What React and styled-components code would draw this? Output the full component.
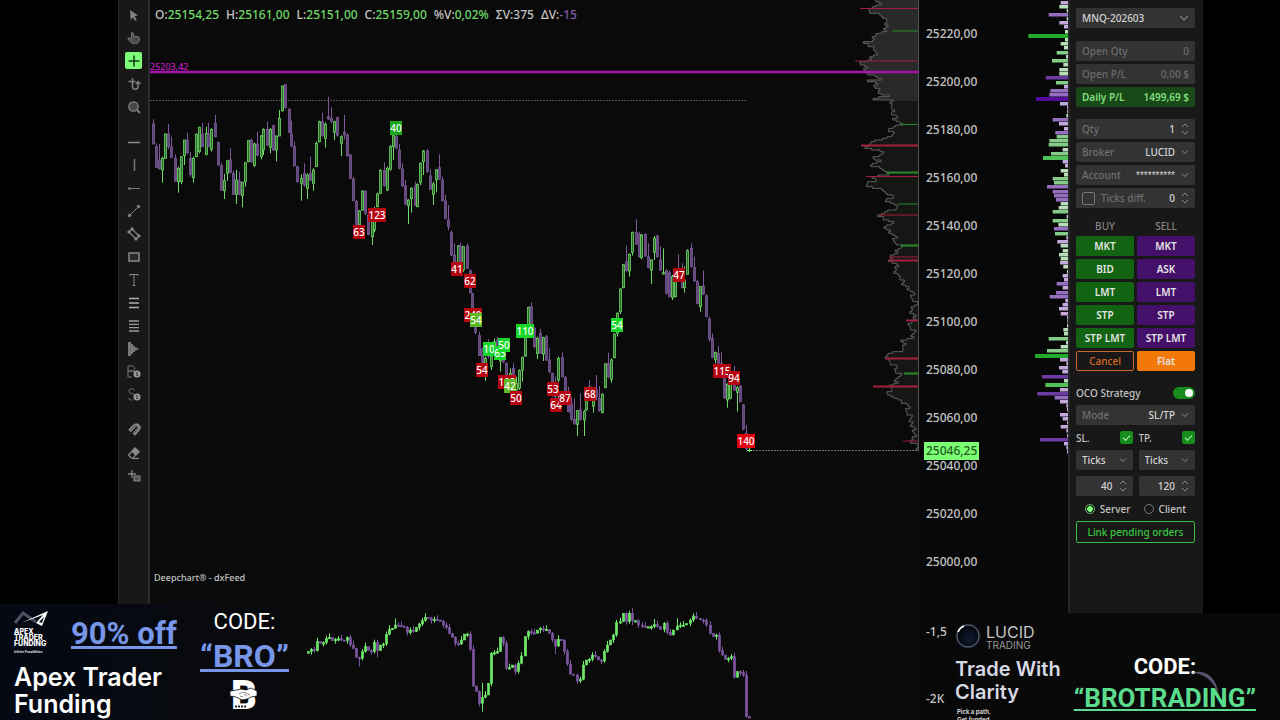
import React, { useState } from 'react';
import styled, { createGlobalStyle, css } from 'styled-components';

const GREEN = '#6fd867';
const PURPLE = '#7c5a99';

// price candles: x, high, body top, body bottom, low, direction (thirds of a pixel)
const candlesA = `130 358 372 432 432 p|140 430 440 502 502 p|149 432 480 507 507 p|158 470 475 510 548 g|167 400 402 475 475 g|176 372 402 440 447 p|185 410 440 473 473 p|195 463 475 543 545 p|204 500 505 545 578 g|213 468 470 545 553 g|222 420 420 467 495 g|232 398 420 458 462 p|241 456 475 523 530 p|249 470 475 533 548 g|259 400 403 470 472 g|268 380 382 455 460 g|277 368 402 440 440 p|288 380 400 463 466 g|296 368 402 440 440 p|305 385 388 448 455 g|315 345 370 410 412 p|324 424 428 495 497 p|333 490 497 570 573 p|342 522 542 572 597 g|351 480 482 520 543 g|361 445 480 517 520 p|370 512 520 583 585 p|379 510 540 583 612 g|388 515 543 583 586 p|398 545 547 587 622 g|407 486 488 545 560 g|415 420 421 485 487 g|424 415 421 485 490 p|434 428 432 497 500 g|443 395 432 465 468 p|453 405 408 470 478 g|461 385 388 450 465 g|471 365 388 435 438 p|480 385 388 442 460 g|490 375 377 450 452 p|500 407 408 450 484 g|508 330 355 408 408 g|517 257 258 332 335 g|527 254 254 323 325 p|537 327 327 397 400 p|544 362 402 438 442 p|554 425 440 497 500 p|563 498 500 545 548 p|573 523 535 550 602 g|583 490 520 555 560 p|591 520 525 565 597 g|600 470 520 540 545 p|610 505 510 550 572 g|619 425 430 500 500 g|628 362 365 425 427 g|637 338 365 407 410 p|646 367 373 415 443 g|656 290 350 357 360 p|665 322 355 363 370 p|673 362 365 397 420 g|683 350 353 405 410 p|693 406 410 430 468 g|703 345 396 405 418 p|711 400 405 467 470 p|720 462 465 535 537 p|730 532 537 602 604 p|739 600 604 675 678 p|748 630 632 675 700 g|757 572 573 630 632 g|766 572 573 640 645 p|776 640 645 703 706 p|786 650 660 710 735 g|794 620 650 690 697 g|803 578 582 620 622 g|812 508 511 580 582 g|822 487 511 557 560 p|831 500 505 570 573 g|840 435 440 508 512 g|849 400 405 440 480 g|858 400 410 445 448 p|868 432 450 505 508 p|877 490 507 558 560 p|886 540 558 612 615 p`;
const candlesB = `25 298 300 317 372 g|35 262 265 296 338 g|45 245 260 315 318 p|53 250 253 320 322 g|62 187 190 247 255 g|71 150 153 185 225 g|82 148 152 215 218 p|91 208 228 268 270 p|99 245 252 283 315 g|108 207 210 240 277 g|118 163 203 237 240 p|127 230 240 302 305 p|135 285 303 355 358 p|145 315 360 380 390 p|155 392 397 465 468 p|164 430 465 490 495 p|174 435 438 490 495 g|182 428 438 490 495 p|191 438 440 510 515 g|201 430 438 505 508 p|210 508 512 578 580 p|218 578 582 625 628 p|227 670 680 697 703 p|237 695 707 767 768 p|247 742 747 790 800 p|256 770 775 800 843 g|264 718 750 768 775 p|274 765 770 800 810 g|283 715 725 760 770 g|292 710 720 750 760 p|301 750 760 783 815 g|310 745 760 785 790 p|320 787 790 835 845 p|330 805 820 845 850 g|340 790 805 850 850 p|348 830 850 870 875 g|357 808 812 865 870 g|366 770 772 810 845 g|376 700 705 768 770 g|385 620 622 690 700 g|394 607 620 690 693 p|403 680 685 740 745 p|413 710 715 760 777 g|422 687 700 760 762 p|431 710 713 762 783 g|440 705 710 780 783 p|449 745 780 815 820 p|458 818 820 885 890 p|467 830 850 890 905 p|476 770 775 840 900 g|486 757 772 830 833 p|495 828 832 880 905 p|504 860 905 935 938 p|513 890 910 958 962 p|523 895 958 970 975 p|532 930 932 973 1008 g|542 880 930 958 962 p|552 930 935 960 1008 g|560 870 890 930 932 g|569 840 860 900 902 p|579 870 880 918 938 g|588 825 870 890 900 p|597 858 895 932 936 p|606 880 883 938 940 g|615 790 792 862 865 g|625 758 790 830 835 p|634 775 780 838 848 g|643 700 702 773 775 g|652 637 640 700 710 g|661 565 567 635 642 g|671 492 494 563 565 g|679 437 485 512 515 p|688 460 463 513 530 g|698 395 397 457 467 g|708 358 397 432 435 p|717 395 403 470 473 p|725 402 405 473 478 g|735 400 403 468 470 p|744 430 470 503 505 p|753 478 480 510 552 g|763 408 415 457 480 g|771 403 408 470 473 p|781 438 480 510 513 p|790 445 518 522 523 g|799 508 512 580 583 p|808 512 518 590 592 p|817 525 530 592 600 g|827 530 535 590 592 g|836 463 510 540 545 p|846 490 520 563 565 p|854 500 540 563 578 g|863 448 452 523 523 g|873 430 445 500 503 p|883 470 502 543 545 p|891 540 545 610 613 p|900 558 560 620 635 g|910 512 558 582 585 p|919 583 587 650 652 p|929 650 657 717 725 p|937 700 715 772 775 p|946 755 757 778 790 g|955 738 760 790 795 p|965 757 790 830 835 p|973 820 830 893 897 p|983 850 853 900 923 g|992 830 850 895 898 g|1002 798 830 870 873 p|1012 858 863 877 935 g|1020 855 858 905 907 p|1030 912 915 987 990 p|1039 975 1000 1045 1050 p`;

const parseCandles = (text, dx, dy) =>
  text.split('|').map((row) => {
    const [x, high, top, bottom, low, dir] = row.split(' ');
    return {
      x: Math.floor(dx + x / 3) + 0.5,
      high: dy + high / 3,
      top: dy + top / 3,
      bottom: dy + bottom / 3,
      low: dy + low / 3,
      up: dir === 'g',
    };
  });

const candles = [...parseCandles(candlesA, 110, 0), ...parseCandles(candlesB, 400, 100)];

// cumulative delta closes: x, close
const deltaCloses = [
  [24, 155], [33, 148], [42, 152], [51, 125], [60, 130], [69, 128], [78, 115], [87, 112], [96, 122],
  [105, 118], [114, 116], [123, 120], [132, 122], [141, 113], [150, 135], [159, 145], [168, 172],
  [177, 175], [186, 155], [195, 140], [204, 152], [213, 155], [222, 127], [232, 152], [241, 135],
  [250, 132], [259, 103], [268, 88], [277, 85], [286, 75], [295, 76], [304, 78], [313, 82], [322, 98],
  [331, 90], [340, 95], [349, 82], [358, 72], [367, 62], [376, 52], [385, 54], [394, 62], [403, 58],
  [412, 60], [421, 64], [430, 75], [439, 83], [448, 100], [457, 112], [466, 130], [475, 132], [484, 120],
  [493, 102], [502, 102], [511, 148], [519, 258], [528, 275], [538, 310], [547, 292], [556, 285],
  [565, 250], [574, 160], [583, 158], [592, 155], [601, 112], [611, 130], [620, 205], [629, 203],
  [638, 195], [647, 215], [656, 190], [665, 168], [675, 110], [684, 95], [693, 98], [702, 100],
  [711, 90], [720, 85], [729, 90], [738, 88], [747, 100], [756, 118], [765, 138], [774, 118], [783, 122],
  [793, 155], [802, 192], [812, 222], [821, 225], [831, 243], [841, 238], [850, 195], [859, 180],
  [869, 178], [878, 165], [887, 170], [896, 180], [905, 183], [914, 155], [923, 135], [932, 120],
  [941, 105], [950, 68], [960, 65], [969, 40], [978, 65], [987, 40], [998, 62], [1007, 62], [1016, 75],
  [1026, 78], [1036, 80], [1046, 80], [1055, 80], [1064, 74], [1073, 80], [1082, 88], [1092, 70],
  [1101, 98], [1111, 105], [1121, 90], [1131, 78], [1140, 75], [1150, 75], [1160, 70], [1170, 60],
  [1180, 48], [1190, 55], [1200, 60], [1210, 62], [1220, 75], [1230, 100], [1240, 110], [1250, 105],
  [1257, 152], [1266, 165], [1275, 178], [1284, 175], [1293, 170], [1302, 232], [1311, 215], [1320, 218],
  [1330, 225], [1339, 350], [1348, 353],
];
const deltaWicks = { 177: [170, 200], 286: [55, 85], 547: [248, 335], 765: [130, 162], 998: [25, 75], 232: [120, 172], 1064: [57, 85], 1131: [55, 85] };

// volume profile outline: y, x
const profileTop = [
  [0, 415], [10, 418], [16, 410], [22, 390], [28, 375], [34, 390], [40, 425], [50, 435], [58, 430],
  [62, 440], [75, 437], [90, 440], [97, 410], [103, 415], [108, 390], [115, 395], [120, 405], [126, 370],
  [130, 390], [145, 395], [155, 412], [165, 400], [175, 395], [183, 365], [190, 360], [197, 372],
  [205, 378], [215, 385], [228, 400], [235, 425], [241, 378], [248, 415], [260, 405], [270, 420],
  [278, 410], [285, 440], [295, 405], [300, 465], [312, 445], [325, 460], [335, 455], [345, 470],
  [355, 462], [370, 480], [378, 470], [386, 450], [395, 455], [408, 455], [418, 405], [426, 400],
  [436, 375], [442, 380], [450, 415], [462, 435], [470, 405], [480, 415], [493, 390], [500, 412],
  [510, 440], [520, 440], [530, 395], [538, 405], [545, 390], [555, 385], [562, 412], [570, 425],
  [580, 445], [590, 460], [602, 432], [612, 475], [625, 460], [635, 440], [645, 420], [655, 425],
  [665, 465], [672, 440], [685, 440], [695, 450], [710, 465],
];
const profileBottom = [
  [28, 465], [47, 482], [60, 470], [75, 460], [81, 450], [92, 450], [100, 465], [115, 475], [130, 465],
  [140, 480], [155, 490], [170, 500], [185, 515], [200, 520], [218, 530], [235, 512], [250, 520],
  [265, 525], [272, 505], [285, 515], [300, 520], [320, 515], [330, 490], [345, 492], [360, 480],
  [370, 450], [386, 438], [400, 455], [412, 475], [425, 460], [430, 490], [445, 460], [455, 480],
  [469, 445], [480, 455], [490, 435], [500, 470], [512, 480], [520, 500], [540, 505], [560, 510],
  [575, 512], [590, 522], [610, 520], [625, 525], [632, 515], [645, 530], [660, 535],
];
const profileKeys = [...profileTop, ...profileBottom.map(([y, x]) => [y + 690, x])];

const buildProfile = () => {
  const steps = [];
  let k = 0;
  for (let y = 0; y <= 1350; y += 5) {
    while (k < profileKeys.length - 2 && profileKeys[k + 1][0] <= y) k += 1;
    const [y0, x0] = profileKeys[k];
    const [y1, x1] = profileKeys[k + 1];
    const t = Math.min(1, (y - y0) / (y1 - y0));
    const wobble = ((y * y) % 17) - 8;
    steps.push([y / 3, Math.min(918, 740 + (x0 + (x1 - x0) * t + wobble) / 3)]);
  }
  return steps;
};
const profile = buildProfile();
const profileLine = profile.map(([y, x], i) => `${i ? 'V' : 'M'}${i ? y : `${x} ${y}`}H${x}`).join('');

// y, left edge, colour, thickness
const profileLevels = [
  [8.5, 860, 'r', 1], [31, 892, 'g', 1], [61, 855, 'r', 1], [124.5, 901, 'g', 1], [145.5, 861, 'r', 2],
  [172.5, 887, 'g', 2], [176.5, 866, 'r', 1], [204, 898, 'g', 1], [215, 879, 'r', 1], [245.5, 901, 'g', 2],
  [257, 889, 'r', 1], [260.5, 889, 'r', 2], [320.5, 906, 'r', 2], [358.5, 885, 'r', 2], [373.5, 904, 'g', 2],
  [386.5, 873, 'r', 2], [441, 903, 'r', 1],
];

const barColors = {
  l: '#b9dfba', v: '#c4a9dc', g: '#85cc88', p: '#976fc0', G: '#22aa2c', h: '#4fc258', P: '#6c3ca4', D: '#540d98',
};
const depthBars = `8 962 v|20 958 l|33 980 l|45 926 p|58 980 l|70 958 v|82 972 v|96 975 l|108 865 G|121 975 l|133 962 l|145 972 l|158 950 g|171 978 l|184 936 g|196 970 l|209 958 l|221 958 l|235 917 P|248 948 g|260 972 v|272 931 p|284 928 p|297 888 D|311 960 v|323 981 v|335 981 v|348 979 l|360 938 p|373 957 v|386 972 v|398 946 p|411 950 g|423 928 g|436 926 g|450 968 l|462 933 g|475 909 h|487 968 v|499 975 v|512 962 l|525 972 l|537 938 g|549 942 g|562 921 p|575 938 p|587 942 p|601 948 p|613 962 l|625 956 l|637 938 g|650 980 l|664 938 g|676 955 l|688 942 p|701 945 g|714 979 v|727 952 v|739 962 l|752 968 l|765 957 l|777 962 l|789 960 v|802 970 l|815 981 l|828 968 v|840 972 v|852 950 p|865 968 v|878 948 p|891 929 p|904 976 v|916 968 v|928 957 v|941 962 v|953 981 v|966 982 v|978 981 l|990 970 l|1003 972 l|1016 926 g|1029 978 l|1042 962 l|1054 921 g|1067 885 G|1080 960 v|1092 979 v|1105 957 v|1117 967 v|1130 906 P|1143 972 l|1155 916 h|1169 960 v|1181 892 P|1194 944 p|1206 960 v|1219 979 v|1231 981 v|1245 960 v|1257 968 v|1269 981 v|1281 962 v|1294 979 v|1307 981 v|1320 900 P|1333 972 v|1345 979 v|1357 981 v`
  .split('|')
  .map((row) => row.split(' '));

const markers = [
  [396, 128, '40', 'g'], [359, 232, '63', 'r'], [377, 215, '123', 'r'], [457, 269, '41', 'r'],
  [470, 281, '62', 'r'], [473, 315, '240', 'r'], [476, 320, '54', 'y'], [482, 370, '54', 'r'],
  [489, 349, '10', 'G'], [500, 353, '63', 'G'], [504, 345, '50', 'G'], [507, 382, '102', 'r'],
  [510, 386, '42', 'y'], [516, 398, '50', 'r'], [525, 331, '110', 'G'], [553, 389, '53', 'r'],
  [556, 405, '64', 'r'], [565, 398, '87', 'r'], [590, 394, '68', 'r'], [617, 325, '54', 'G'],
  [679, 275, '47', 'r'], [722, 371, '115', 'r'], [734, 378, '94', 'r'], [746, 441, '140', 'R'],
];
const markerColors = { g: '#16a716', G: '#17d827', y: '#5cb91f', r: '#b60411', R: '#e3000f' };

const prices = ['25220,00', '25200,00', '25180,00', '25160,00', '25140,00', '25120,00', '25100,00', '25080,00', '25060,00', '25040,00', '25020,00', '25000,00'];

const toolGroups = [
  [
    ['Select', <path key="a" d="M3 2l8 5.500-3.500.8 2.300 3.500-1.600 1.100L6 9.200 3.800 12z" fill="#858585" />],
    ['Pan', <path key="a" d="M4.500 6V2.400c0-1.300 1.800-1.300 1.800 0V5l5 .8c1 .3 1.300 1 1.200 2-.2 3-1.500 4.800-4 4.800H6.300C4.700 12.600 2.500 10 1 8c-.2-1 1-1.600 1.800-1L4.500 8z" fill="#4c4c4c" stroke="#777" />],
    ['Crosshair', <path key="a" d="M7 1.500v11M1.500 7h11" stroke="#123f12" strokeWidth="1.500" />],
    ['Snap cross', <path key="a" d="M5.500 1v8.500c0 3.500 5.500 3.500 5.500 0V5.500M1.500 4.500h7M8.700 7L11 4.500 13.300 7" stroke="#808080" strokeWidth="1.500" fill="none" />],
    ['Zoom', <g key="a" stroke="#858585" fill="#474747" strokeWidth="1.300"><circle cx="6.500" cy="6.500" r="4.700" /><path d="M10 10l3 3" strokeWidth="1.800" /></g>],
  ],
  [
    ['Horizontal line', <path key="a" d="M1 7.500h12" stroke="#8a8a8a" strokeWidth="1.500" />],
    ['Vertical line', <path key="a" d="M7.500 1v12" stroke="#777" strokeWidth="1.500" />],
    ['Ray', <g key="a" stroke="#777" fill="#777"><path d="M2 7.500h11" /><circle cx="2.500" cy="7.500" r="1" /></g>],
    ['Trend line', <g key="a" stroke="#808080" fill="#808080"><path d="M2 12L12 2" /><circle cx="2.500" cy="11.500" r="1.300" /><circle cx="11.500" cy="2.500" r="1.300" /></g>],
    ['Channel', <g key="a" stroke="#858585" fill="#858585"><path d="M5 2l7 7M2 5l7 7M5 2L2 5M12 9l-3 3" strokeWidth="1.200" /><circle cx="5" cy="2" r="1.200" /><circle cx="2" cy="5" r="1.200" /><circle cx="12" cy="9" r="1.200" /><circle cx="9" cy="12" r="1.200" /></g>],
    ['Rectangle', <rect key="a" x="2" y="3" width="10" height="8" fill="#292929" stroke="#888" strokeWidth="1.500" />],
    ['Text', <path key="a" d="M3 3V1.500h8V3M7 1.500v11M5.500 12.500h3" stroke="#858585" fill="none" />],
    ['Levels', <path key="a" d="M2 2.500h10M2 7h10M2 11.500h10" stroke="#aaa" strokeWidth="1.500" />],
    ['Fibonacci', <path key="a" d="M2 2h10M2 5.300h10M2 8.700h10M2 12h10" stroke="#999" strokeWidth="1.300" />],
    ['Volume profile', <path key="a" d="M1 0h3v2h2v2h2v1.500h2v1h2v1h-2v1H8V10H6v2H4v2H1z" fill="#777" />],
    ['Buy order', <g key="a" fill="none" stroke="#777"><path d="M1 1h4.500c3 0 3 5 0 5H1h5c2 0 2 1 2 2M1 1v11h4" /><circle cx="10" cy="9" r="3.500" fill="#999" stroke="none" /><path d="M11 7.700H9.300v1.300h1.500v1.500H9" stroke="#333" strokeWidth=".8" /></g>],
    ['Sell order', <g key="a" fill="none" stroke="#777"><path d="M7.500 2.500C7 0 1.500 0 2 3.500 2.500 6 6 5 7 7M1.500 10c.5 2 3 2 4 2" /><circle cx="10" cy="9" r="3.500" fill="#999" stroke="none" /><path d="M11 7.700H9.300v1.300h1.500v1.500H9" stroke="#333" strokeWidth=".8" /></g>],
  ],
  [
    ['Magnet', <g key="a" fill="none"><path d="M2.500 8L7 3.200c3-2.700 6.500.5 4 3.500L6.800 11.500" stroke="#888" strokeWidth="3.500" /><path d="M3.500 7L7 3.600c2.500-2 5.200.5 3.200 3L7 10" stroke="#333" strokeWidth=".8" /></g>],
    ['Eraser', <g key="a" stroke="#8a8a8a" strokeWidth="1.200" fill="none"><path d="M1.500 9L8 2l4 3.800L6 12H4z" /><path d="M5 5.200L8 2l4 3.800-3.200 3.400z" fill="#888" /><path d="M5 12.500h7" /></g>],
    ['Add object', <g key="a" stroke="#888" fill="#555"><path d="M5 1v8M1 5h8" strokeWidth="1.300" /><rect x="7" y="7" width="6" height="5" /></g>],
  ],
];

const orderRows = [
  ['MKT', 'MKT'],
  ['BID', 'ASK'],
  ['LMT', 'LMT'],
  ['STP', 'STP'],
  ['STP LMT', 'STP LMT'],
];

const Chevron = ({ size = 8 }) => (
  <svg width={size} height={size} viewBox="0 0 8 8" fill="none" stroke="currentColor" aria-hidden="true">
    <path d="M1 2.500l3 3 3-3" />
  </svg>
);

const Spinner = () => (
  <svg width="8" height="12" viewBox="0 0 8 12" fill="none" stroke="currentColor" aria-hidden="true">
    <path d="M1 4l3-3 3 3M1 8l3 3 3-3" />
  </svg>
);

const PriceChart = () => (
  <ChartSvg viewBox="150 0 769 603" role="img" aria-label="Price chart">
    <path d={`${profileLine}H918V0Z`} fill="#161615" />
    <clipPath id="session">
      <rect x="850" y="0" width="69" height="101" />
    </clipPath>
    <path d={`${profileLine}H918V0Z`} fill="#2a2929" clipPath="url(#session)" />
    <path d={profileLine} fill="none" stroke="#5e5e5e" />
    {profileLevels.map(([y, x, color, size]) => (
      <path key={y} d={`M${x} ${y}H918`} stroke={color === 'r' ? '#a31f3b' : '#278c27'} strokeWidth={size} />
    ))}
    <path d="M918.500 0V452" stroke="#515151" />
    <path d="M150 100.500H746" stroke="#4b4b4b" strokeDasharray="2 1" />
    <path d="M750 450.500H918" stroke="#737373" strokeDasharray="2 1" />
    <path d="M150 72H919" stroke="#a614aa" strokeWidth="2.500" />
    <text x="150" y="70" fontSize="9" fontWeight="500" fill="#c51ac8">25203,42</text>
    {candles.map((c) => (
      <g key={`${c.x}-${c.top}`} stroke={c.up ? GREEN : PURPLE}>
        <path d={`M${c.x} ${c.high}V${c.top}M${c.x} ${c.bottom}V${c.low}`} />
        <rect x={c.x - 1} y={c.top} width="2" height={Math.max(1, c.bottom - c.top)} fill={c.up ? '#2f6a2d' : '#604679'} strokeWidth=".8" />
      </g>
    ))}
    <path d="M747 450.500h5M749.500 448v4" stroke="#72ff66" />
    {markers.map(([x, y, label, color]) => (
      <g key={`${x}-${y}`}>
        <rect x={x - label.length * 3} y={y - 7} width={label.length * 6} height="14" fill={markerColors[color]} />
        <text x={x} y={y + 4} fontSize="10" fontWeight="500" textAnchor="middle" fill="#fff">{label}</text>
      </g>
    ))}
  </ChartSvg>
);

const DeltaChart = () => (
  <ChartSvg viewBox="150 603 769 117" role="img" aria-label="Cumulative delta">
    {deltaCloses.map(([x, close], i) => {
      const open = i ? deltaCloses[i - 1][1] : 160;
      const top = Math.min(open, close);
      const bottom = Math.max(open, close);
      const [high, low] = deltaWicks[x] || [top - (i % 4) * 4, bottom + ((i * 3) % 4) * 3];
      const color = close <= open ? '#6ee868' : '#7c55a0';
      const cx = Math.floor(300 + x / 3) + 0.5;
      return (
        <g key={x} fill={color} stroke={color}>
          <path d={`M${cx} ${600 + high / 3}V${600 + low / 3}`} />
          <rect x={cx - 1.200} y={600 + top / 3} width="2.400" height={Math.max(1.500, (bottom - top) / 3)} strokeWidth=".5" />
        </g>
      );
    })}
  </ChartSvg>
);

const DepthChart = () => (
  <DepthSvg width="40" height="460" viewBox="1028 0 40 460" role="img" aria-label="Volume by price">
    {depthBars.map(([y, left, color]) => (
      <rect key={y} x={740 + left / 3} y={Math.round(y / 3 - 2)} width={(985 - left) / 3} height={color === 'G' || color === 'h' || color === 'D' ? 4 : 3.500} fill={barColors[color]} />
    ))}
  </DepthSvg>
);

const OrderPanel = () => {
  const [qty, setQty] = useState('1');
  const [offset, setOffset] = useState('0');
  const [useOffset, setUseOffset] = useState(false);
  const [oco, setOco] = useState(true);
  const [stops, setStops] = useState({ sl: true, tp: true });
  const [ticks, setTicks] = useState({ sl: '40', tp: '120' });
  const [side, setSide] = useState('server');

  return (
    <Panel>
      <Field>
        <Select aria-label="Instrument" $align="left" defaultValue="MNQ-202603">
          <option>MNQ-202603</option>
        </Select>
        <Chevron size={10} />
      </Field>
      <Group $top={13}>
        <Field as="div" $muted>
          <span>Open Qty</span>
          <span>0</span>
        </Field>
        <Field as="div" $muted>
          <span>Open P/L</span>
          <span>0,00 $</span>
        </Field>
        <Field as="div" $profit>
          <span>Daily P/L</span>
          <span>1499,69 $</span>
        </Field>
      </Group>
      <Group $top={12}>
        <Field>
          <Caption>Qty</Caption>
          <Input value={qty} onChange={(e) => setQty(e.target.value)} />
          <Spinner />
        </Field>
        <Field>
          <Caption>Broker</Caption>
          <Select defaultValue="LUCID">
            <option>LUCID</option>
          </Select>
          <Chevron />
        </Field>
        <Field>
          <Caption>Account</Caption>
          <Select $masked defaultValue="**********">
            <option>**********</option>
          </Select>
          <Chevron />
        </Field>
        <Field as="div">
          <Check id="ticks-diff" type="checkbox" checked={useOffset} onChange={(e) => setUseOffset(e.target.checked)} />
          <Caption as="label" htmlFor="ticks-diff">Ticks diff.</Caption>
          <Input aria-label="Ticks difference" value={offset} onChange={(e) => setOffset(e.target.value)} />
          <Spinner />
        </Field>
      </Group>
      <Orders>
        <Heading>BUY</Heading>
        <Heading>SELL</Heading>
        {orderRows.map(([buy, sell]) => (
          <React.Fragment key={buy}>
            <OrderButton $bg="#126412">{buy}</OrderButton>
            <OrderButton $bg="#45106a">{sell}</OrderButton>
          </React.Fragment>
        ))}
        <CancelButton>Cancel</CancelButton>
        <OrderButton $bg="#f27908">Flat</OrderButton>
      </Orders>
      <Line as="label" $top={9}>
        OCO Strategy
        <Switch type="checkbox" role="switch" checked={oco} onChange={(e) => setOco(e.target.checked)} />
      </Line>
      <Field>
        <Caption>Mode</Caption>
        <Select defaultValue="SL/TP">
          <option>SL/TP</option>
        </Select>
        <Chevron />
      </Field>
      <Stops>
        {['sl', 'tp'].map((key) => (
          <div key={key}>
            <Line as="label">
              {key.toUpperCase()}.
              <Check type="checkbox" checked={stops[key]} onChange={(e) => setStops({ ...stops, [key]: e.target.checked })} />
            </Line>
            <Field>
              <Select aria-label={`${key} unit`} $align="left" defaultValue="Ticks">
                <option>Ticks</option>
              </Select>
              <Chevron />
            </Field>
            <StopValue>
              <Input aria-label={`${key} distance`} value={ticks[key]} onChange={(e) => setTicks({ ...ticks, [key]: e.target.value })} />
              <Spinner />
            </StopValue>
          </div>
        ))}
      </Stops>
      <Radios>
        {['Server', 'Client'].map((name) => (
          <label key={name}>
            <Radio type="radio" name="side" checked={side === name.toLowerCase()} onChange={() => setSide(name.toLowerCase())} />
            {name}
          </label>
        ))}
      </Radios>
      <LinkButton>Link pending orders</LinkButton>
    </Panel>
  );
};

const App = () => {
  const [tool, setTool] = useState('Crosshair');

  return (
    <Page>
      <GlobalStyle />
      <Toolbar>
        {toolGroups.map((group) => (
          <ToolGroup key={group[0][0]}>
            {group.map(([name, icon]) => (
              <Tool key={name} aria-label={name} $active={tool === name} onClick={() => setTool(name)}>
                <svg width="14" height="14" viewBox="0 0 14 14">{icon}</svg>
              </Tool>
            ))}
          </ToolGroup>
        ))}
      </Toolbar>

      <Charts>
        <PriceChart />
        <DeltaChart />
        <Quote>
          <span>O:<b>25154,25</b></span>
          <span>H:<b>25161,00</b></span>
          <span>L:<b>25151,00</b></span>
          <span>C:<b>25159,00</b></span>
          <span>%V:<b>0,02%</b></span>
          <span>ΣV:375</span>
          <span>ΔV:<i>-15</i></span>
        </Quote>
        <Credit>Deepchart® - dxFeed</Credit>
      </Charts>

      <Axis>
        <AxisLabels>
          {prices.map((price) => (
            <li key={price}>{price}</li>
          ))}
        </AxisLabels>
        <DeltaLabels>
          <li>-1,5</li>
          <li>-2K</li>
        </DeltaLabels>
        <LastPrice>25046,25</LastPrice>
        <DepthChart />
      </Axis>

      <OrderPanel />

      <ApexBanner>
        <div>
          <ApexTop>
            <ApexLogo>
              <svg width="36" height="17" viewBox="0 0 36 17">
                <path d="M1 13L9 3l13 9" stroke="#4d5063" strokeWidth="3" fill="none" />
                <path d="M7 13L34 1l-6 15-6-3 7-8z" fill="#fff" />
                <path d="M25 12l3 1 2-6z" fill="#070b14" />
              </svg>
              <strong>APEX<br />TRADER<br />FUNDING</strong>
              <small>Infinite Possibilities.</small>
            </ApexLogo>
            <Discount href="#apex">90% off</Discount>
          </ApexTop>
          <ApexTitle>Apex Trader Funding</ApexTitle>
        </div>
        <ApexCode>
          <span>CODE:</span>
          <a href="#bro">“BRO”</a>
          <svg width="28" height="32" viewBox="0 0 28 32">
            <text x="1" y="31" fontFamily="Roboto" fontWeight="900" fontSize="40" fill="#fff">B</text>
            <path d="M0 13l7-1 4-1 5 1 5-2 6 3v5l-6 1-4 2-5 1-6-3-6-1z" fill="#fff" stroke="#111" strokeWidth=".8" />
            <path d="M9 16l4-2 3 1 4 2M10 18l3 1M14 16l3 2" fill="none" stroke="#555" strokeWidth=".7" />
            <path d="M5 28.500h12" stroke="#222" strokeWidth="2" strokeDasharray="2 1" />
          </svg>
        </ApexCode>
      </ApexBanner>

      <LucidBanner>
        <LucidPitch>
          <LucidLogo>
            <svg width="28" height="28" viewBox="0 0 28 28">
              <defs>
                <radialGradient id="glow">
                  <stop offset=".75" stopColor="#8fa6ce" stopOpacity=".55" />
                  <stop offset="1" stopColor="#5573a8" stopOpacity="0" />
                </radialGradient>
                <radialGradient id="moon" cx=".55" cy=".6">
                  <stop offset=".3" stopColor="#0c1729" />
                  <stop offset="1" stopColor="#05070c" />
                </radialGradient>
              </defs>
              <circle cx="13" cy="13" r="13" fill="url(#glow)" />
              <circle cx="13" cy="13" r="11" fill="url(#moon)" stroke="#7c8aa5" strokeWidth=".7" />
              <path d="M3 9A11 11 0 0 1 9 3" stroke="#fff" strokeWidth="1.500" fill="none" />
            </svg>
            <p>LUCID<small>TRADING</small></p>
          </LucidLogo>
          <h2>Trade With Clarity</h2>
          <Fine>Pick a path.<br />Get funded.</Fine>
        </LucidPitch>
        <LucidCode>
          <Eclipse width="34" height="34" viewBox="0 0 34 34" aria-hidden="true">
            <path d="M3 6C18 1 29 11 31 29 26 13 15 6 3 6z" fill="#8589b0" opacity=".6" />
          </Eclipse>
          <span>CODE:</span>
          <a href="#brotrading">“BROTRADING”</a>
        </LucidCode>
      </LucidBanner>
    </Page>
  );
};

export default App;

const GlobalStyle = createGlobalStyle`
  * {
    box-sizing: border-box;
  }

  body {
    margin: 0;
    background: #000;
    color: #c4c4c4;
    font-family: 'Noto Sans', 'Open Sans', sans-serif;
    font-size: 12px;
    font-weight: 500;
  }

  button, input, select {
    font: inherit;
    color: inherit;
    margin: 0;
    padding: 0;
    border: 0;
    background: none;
  }

  ul, p, h2 {
    margin: 0;
    padding: 0;
    list-style: none;
  }
`;

const Page = styled.main`
  position: relative;
  display: grid;
  grid-template-columns: 32px minmax(0, 1fr) 149px 135px;
  align-items: start;
  min-height: 100vh;
  padding: 0 77px 0 118px;
  overflow: hidden;
`;

const Toolbar = styled.nav`
  display: flex;
  flex-direction: column;
  gap: 12px;
  min-height: 604px;
  padding-top: 3px;
  background: #181818;
  border-left: 1px solid #262626;
  border-right: 2px solid #2c2c2c;
`;

const ToolGroup = styled.div`
  display: flex;
  flex-direction: column;
  align-items: center;
`;

const Tool = styled.button`
  display: grid;
  place-items: center;
  width: 17px;
  height: 17px;
  margin: 3px 0;
  border-radius: 2px;
  background: ${({ $active }) => ($active ? '#7dfc79' : 'none')};
`;

const Charts = styled.section`
  position: relative;
  align-self: stretch;
  background: #0a0a0a;
`;

const ChartSvg = styled.svg`
  display: block;
  width: 100%;
`;

const Quote = styled.div`
  position: absolute;
  top: 5px;
  left: 5px;
  display: flex;
  gap: 7px;
  line-height: 20px;

  b {
    font-weight: 500;
    color: ${GREEN};
  }

  i {
    font-style: normal;
    color: #805ca6;
  }
`;

const Credit = styled.p`
  position: absolute;
  top: 571px;
  left: 4px;
  font-size: 9px;
  line-height: 14px;
`;

const Axis = styled.aside`
  position: relative;
  align-self: stretch;
  padding: 10px 0 0 7px;
  background: #080808;
`;

const AxisLabels = styled.ul`
  li {
    height: 48px;
    line-height: 48px;
  }
`;

const DeltaLabels = styled.ul`
  display: grid;
  gap: 47px;
  padding-top: 36px;

  li {
    line-height: 20px;
  }
`;

const LastPrice = styled.output`
  position: absolute;
  top: 442px;
  left: 5px;
  padding: 0 2px;
  line-height: 18px;
  background: #7bff73;
  color: #285c25;
`;

const DepthSvg = styled.svg`
  position: absolute;
  top: 0;
  right: 0;
`;

const Panel = styled.form.attrs({ onSubmit: (e) => e.preventDefault() })`
  min-height: 613px;
  padding: 8px 8px 0 6px;
  background: #181818;
  border-left: 2px solid #262626;
  font-size: 10px;
`;

const Group = styled.div`
  display: grid;
  grid-template-columns: minmax(0, 1fr);
  gap: 3px;
  margin-top: ${({ $top }) => $top}px;
`;

const Field = styled.label`
  display: flex;
  align-items: center;
  gap: 6px;
  height: 20px;
  padding: 0 6px;
  border-radius: 2px;
  background: #333;
  color: #8a8a8a;

  ${({ $muted }) => $muted && css`
    justify-content: space-between;
    color: #6c6c6c;
  `}

  ${({ $profit }) => $profit && css`
    justify-content: space-between;
    background: #194919;
    color: #82df7e;
    font-weight: 600;
  `}
`;

const Caption = styled.span`
  color: #707070;
  white-space: nowrap;
`;

const Input = styled.input`
  flex: 1;
  width: 0;
  min-width: 0;
  color: #d4d4d4;
  text-align: right;
`;

const Select = styled.select`
  flex: 1;
  min-width: 0;
  appearance: none;
  color: #d4d4d4;
  text-align-last: ${({ $align }) => $align || 'right'};

  ${({ $masked }) => $masked && css`
    font-family: 'Liberation Sans', sans-serif;
  `}
`;

const Check = styled.input`
  flex: none;
  appearance: none;
  width: 13px;
  height: 13px;
  border-radius: 2px;
  border: 1px solid #777;

  &:checked {
    border-color: #158c1b;
    background: #158c1b;
  }

  &:checked::after {
    content: '';
    display: block;
    width: 6px;
    height: 3px;
    margin: 3px auto;
    border: solid #b9f0b9;
    border-width: 0 0 1px 1px;
    transform: rotate(-45deg);
  }
`;

const Orders = styled.div`
  display: grid;
  grid-template-columns: 1fr 1fr;
  gap: 3px;
  margin-top: 12px;
`;

const Heading = styled.span`
  line-height: 13px;
  text-align: center;
  color: #858585;
`;

const OrderButton = styled.button`
  height: 20px;
  border-radius: 2px;
  background: ${({ $bg }) => $bg};
  color: #e4e4e4;
  font-weight: 600;
`;

const CancelButton = styled.button`
  border: 1px solid #c9692c;
  border-radius: 2px;
  color: #dc6824;
`;

const Line = styled.div`
  display: flex;
  align-items: center;
  justify-content: space-between;
  height: 25px;
  margin-top: ${({ $top }) => $top || 0}px;
`;

const Switch = styled.input`
  appearance: none;
  width: 22px;
  height: 12px;
  padding: 2px;
  border-radius: 6px;
  background: #444;

  &::before {
    content: '';
    display: block;
    width: 8px;
    height: 8px;
    border-radius: 50%;
    background: #fff;
  }

  &:checked {
    background: #158c1b;
  }

  &:checked::before {
    margin-left: auto;
  }
`;

const Stops = styled.div`
  display: grid;
  grid-template-columns: 1fr 1fr;
  gap: 6px;
`;

const StopValue = styled(Field)`
  margin-top: 6px;
`;

const Radios = styled.div`
  display: flex;
  justify-content: center;
  gap: 13px;
  height: 25px;

  label {
    display: flex;
    align-items: center;
    gap: 5px;
  }
`;

const Radio = styled.input`
  appearance: none;
  width: 10px;
  height: 10px;
  border: 1px solid #747474;
  border-radius: 50%;

  &:checked {
    border-color: #66b966;
    background: radial-gradient(#80ff7c 45%, transparent 55%);
  }
`;

const LinkButton = styled.button`
  width: 100%;
  height: 22px;
  border: 1px solid #36bb3a;
  border-radius: 2px;
  color: #3bc743;
`;

const ApexBanner = styled.section`
  position: absolute;
  left: 0;
  bottom: 0;
  display: flex;
  gap: 22px;
  height: 116px;
  padding: 6px 18px 0 14px;
  overflow: hidden;
  background: linear-gradient(90deg, #040914, #0a0a0c);
  color: #fff;
`;

const ApexTop = styled.div`
  display: flex;
  gap: 21px;
`;

const ApexLogo = styled.div`
  display: flex;
  flex-direction: column;
  width: 36px;

  strong {
    margin-top: 2px;
    font: 800 7px/6px Inter, sans-serif;
  }

  small {
    margin-top: 3px;
    font: 600 3px/4px Inter, sans-serif;
    white-space: nowrap;
  }
`;

const Discount = styled.a`
  margin-top: 6px;
  color: #7796e8;
  font: 700 31px/36px Roboto, sans-serif;
`;

const ApexTitle = styled.h2`
  width: 164px;
  margin-top: 10px;
  font: 600 25px/27px Inter, sans-serif;
`;

const ApexCode = styled.div`
  display: flex;
  flex-direction: column;
  align-items: center;

  span {
    font: 400 22px/24px Roboto, sans-serif;
  }

  a {
    margin: 3px 0;
    color: #7796e8;
    font: 700 32px/38px Roboto, sans-serif;
  }
`;

const LucidBanner = styled.section`
  position: absolute;
  right: 0;
  bottom: 0;
  display: flex;
  justify-content: space-between;
  width: 325px;
  height: 107px;
  padding: 10px 24px 0 0;
  overflow: hidden;
  background: #090909;
`;

const LucidPitch = styled.div`
  width: 116px;

  h2 {
    margin-top: 7px;
    color: #d8d8e4;
    font: 600 20px/23px Inter, sans-serif;
  }
`;

const LucidLogo = styled.div`
  display: flex;
  gap: 3px;

  p {
    font: 400 16px/18px Inter, sans-serif;
  }

  small {
    display: block;
    color: #999;
    font: 400 10px/8px Inter, sans-serif;
  }
`;

const Fine = styled.p`
  margin-top: 4px;
  padding-left: 2px;
  color: #e0e0e0;
  font: 600 6px/8px Inter, sans-serif;
`;

const LucidCode = styled.div`
  position: relative;
  display: flex;
  flex-direction: column;
  align-items: center;
  padding-top: 30px;

  span {
    color: #fff;
    font: 700 22px/28px Roboto, sans-serif;
  }

  a {
    position: relative;
    color: #5bdc8d;
    font: 700 26px/34px Roboto, sans-serif;
  }
`;

const Eclipse = styled.svg`
  position: absolute;
  top: 44px;
  right: 34px;
`;
